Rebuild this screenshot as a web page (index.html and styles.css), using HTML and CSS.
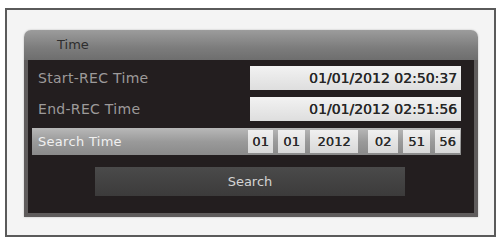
FILE: index.html
```html
<!DOCTYPE html>
<html>
<head>
<meta charset="utf-8">
<link rel="stylesheet" href="styles.css">
</head>
<body>
<div class="frame">
  <div class="panel">
    <div class="title">Time</div>
    <div class="body">
      <div class="row">
        <span class="label">Start-REC Time</span>
        <span class="value">01/01/2012 02:50:37</span>
      </div>
      <div class="row">
        <span class="label">End-REC Time</span>
        <span class="value">01/01/2012 02:51:56</span>
      </div>
      <div class="row search-row">
        <span class="label">Search Time</span>
        <div class="fields">
          <span class="f f-mo">01</span>
          <span class="f f-dy">01</span>
          <span class="f f-yr">2012</span>
          <span class="f f-hr">02</span>
          <span class="f f-mi">51</span>
          <span class="f f-se">56</span>
        </div>
      </div>
      <div class="btn-wrap"><div class="btn">Search</div></div>
    </div>
  </div>
</div>
</body>
</html>
```
FILE: styles.css
```css
html, body {
  margin: 0;
  padding: 0;
  background: #ffffff;
  font-family: "DejaVu Sans", Verdana, sans-serif;
}
.frame {
  box-sizing: border-box;
  margin: 8px 0 0 5px;
  width: 491px;
  height: 229px;
  border: 2px solid #5a5a5a;
  background: #f4f4f4;
  padding: 20px 0 0 17px;
}
.panel {
  width: 454px;
  height: 187px;
  display: flex;
  flex-direction: column;
  border-radius: 7px 7px 0 0;
  overflow: hidden;
  box-shadow: 0 0 2px rgba(0,0,0,0.25);
}
.title {
  height: 30px;
  flex: none;
  background: linear-gradient(#9c9c9c, #7c7c7c 60%, #6e6e6e);
  color: #2e2e2e;
  font-size: 13px;
  line-height: 30px;
  padding-left: 33px;
  box-sizing: border-box;
}
.body {
  flex: 1;
  background: #231e1f;
  border: 4px solid #5f5c5c;
  border-top: none;
  display: flex;
  flex-direction: column;
  padding: 6px 13px 0 4px;
}
.row {
  display: flex;
  align-items: center;
  justify-content: space-between;
  height: 24px;
  margin-bottom: 7px;
}
.label {
  color: #9d9a9a;
  font-size: 14px;
  letter-spacing: 0.3px;
  padding-left: 6px;
}
.value {
  box-sizing: border-box;
  width: 211px;
  height: 24px;
  background: linear-gradient(#f2f2f2, #dedede);
  color: #262626;
  font-size: 14px;
  text-align: right;
  line-height: 24px;
  padding-right: 4px;
  text-shadow: 0.4px 0 0 #262626;
}
.search-row {
  height: 27px;
  background: linear-gradient(#b8b8b8, #9a9a9a 50%, #8a8a8a);
  margin-bottom: 12px;
}
.search-row .label {
  color: #f0f0f0;
  font-size: 13px;
}
.fields {
  display: flex;
  height: 23px;
  gap: 5px;
  margin-right: 1px;
}
.f {
  background: linear-gradient(#f0f0f0, #d8d8d8);
  color: #2a2a2a;
  font-size: 13px;
  line-height: 23px;
  text-align: center;
  text-shadow: 0.4px 0 0 #2a2a2a;
}
.f-mo { width: 25px; }
.f-dy { width: 27px; }
.f-yr { width: 48px; }
.f-hr { width: 30px; margin-left: 5px; }
.f-mi { width: 27px; }
.f-se { width: 25px; }
.btn-wrap {
  display: flex;
  padding-left: 63px;
}
.btn {
  width: 310px;
  height: 29px;
  background: linear-gradient(#4a4a4a, #3c3b3b);
  color: #d4d4d4;
  font-size: 13px;
  text-align: center;
  line-height: 29px;
}
```
